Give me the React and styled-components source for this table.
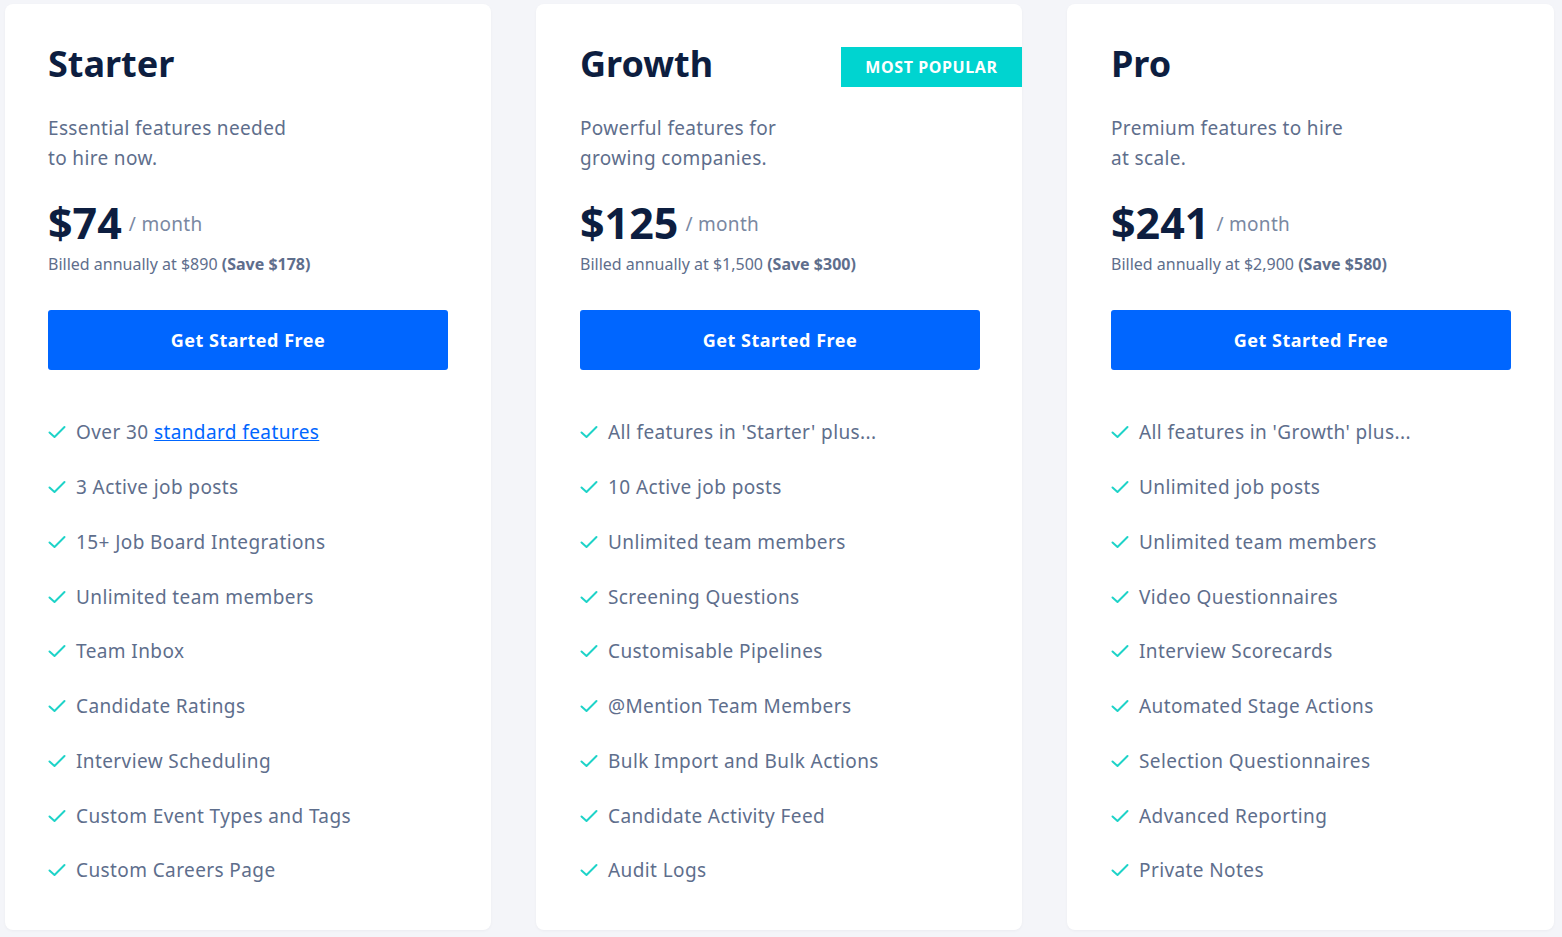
import React from 'react'
import styled, { createGlobalStyle } from 'styled-components'

const plans = [
  {
    name: 'Starter',
    desc: ['Essential features needed', 'to hire now.'],
    price: '$74',
    billed: '$890',
    save: '$178',
    features: [
      'Over 30 |standard features',
      '3 Active job posts',
      '15+ Job Board Integrations',
      'Unlimited team members',
      'Team Inbox',
      'Candidate Ratings',
      'Interview Scheduling',
      'Custom Event Types and Tags',
      'Custom Careers Page',
    ],
  },
  {
    name: 'Growth',
    popular: true,
    desc: ['Powerful features for', 'growing companies.'],
    price: '$125',
    billed: '$1,500',
    save: '$300',
    features: [
      "All features in 'Starter' plus...",
      '10 Active job posts',
      'Unlimited team members',
      'Screening Questions',
      'Customisable Pipelines',
      '@Mention Team Members',
      'Bulk Import and Bulk Actions',
      'Candidate Activity Feed',
      'Audit Logs',
    ],
  },
  {
    name: 'Pro',
    desc: ['Premium features to hire', 'at scale.'],
    price: '$241',
    billed: '$2,900',
    save: '$580',
    features: [
      "All features in 'Growth' plus...",
      'Unlimited job posts',
      'Unlimited team members',
      'Video Questionnaires',
      'Interview Scorecards',
      'Automated Stage Actions',
      'Selection Questionnaires',
      'Advanced Reporting',
      'Private Notes',
    ],
  },
]

const GlobalStyle = createGlobalStyle`
  body {
    margin: 0;
    background: #f4f5f9;
    font-family: "Noto Sans", "Liberation Sans", sans-serif;
  }
`

const Page = styled.div`
  display: grid;
  grid-template-columns: 486px 486px 487px;
  column-gap: 45px;
  padding: 4px 8px 7px 5px;
`

const Card = styled.div`
  position: relative;
  background: #fff;
  border-radius: 8px;
  height: 926px;
  box-sizing: border-box;
  padding: 37px 43px 0 ${(props) => (props.first ? 43 : 44)}px;
  box-shadow: 0 1px 3px rgba(20, 30, 60, 0.04);
`

const Badge = styled.div`
  position: absolute;
  top: 43px;
  right: 0;
  width: 181px;
  height: 40px;
  background: #00d4d0;
  color: #fff;
  font-size: 16px;
  font-weight: 700;
  letter-spacing: 0.6px;
  display: flex;
  align-items: center;
  justify-content: center;
`

const Title = styled.h2`
  margin: 0;
  font-size: 36px;
  line-height: 46px;
  font-weight: 700;
  color: #0d1e40;
`

const Desc = styled.p`
  margin: 26px 0 0;
  font-size: 19px;
  line-height: 30px;
  letter-spacing: 0.35px;
  color: #5e6e8c;
`

const PriceRow = styled.div`
  margin-top: 24px;
  display: flex;
  align-items: center;
  gap: 7px;
`

const Price = styled.span`
  font-size: 43px;
  line-height: 52px;
  font-weight: 700;
  color: #0d1e40;
`

const Per = styled.span`
  font-size: 19px;
  letter-spacing: 0.3px;
  color: #7a88a2;
  padding-top: 2px;
`

const Billed = styled.div`
  margin-top: 4px;
  font-size: 16px;
  color: #5e6e8c;

  b {
    font-weight: 700;
  }
`

const Button = styled.button`
  margin-top: 35px;
  width: 400px;
  height: 60px;
  border: none;
  border-radius: 3px;
  background: #0066ff;
  color: #fff;
  font-family: inherit;
  font-size: 18px;
  font-weight: 700;
  letter-spacing: 0.5px;
  cursor: pointer;
`

const List = styled.ul`
  list-style: none;
  margin: 35px 0 0;
  padding: 0;
`

const Item = styled.li`
  height: 54.75px;
  display: flex;
  align-items: center;
  gap: 10px;
  font-size: 19px;
  letter-spacing: 0.4px;
  color: #5e6e8c;

  a {
    color: #0066ff;
    text-decoration: underline;
  }
`

const Check = () => (
  <svg width="18" height="14" viewBox="0 0 18 14" fill="none">
    <path d="M1.5 7.5 L6.5 12 L16.5 2" stroke="#1ed3c8" strokeWidth="2" strokeLinecap="round" strokeLinejoin="round" />
  </svg>
)

const Feature = ({ text }) => {
  const [plain, link] = text.split('|')
  return (
    <Item>
      <Check />
      <span>
        {plain}
        {link && <a href="#">{link}</a>}
      </span>
    </Item>
  )
}

const App = () => {
  return (
    <>
      <GlobalStyle />
      <Page>
        {plans.map((p, i) => (
          <Card key={p.name} first={i === 0}>
            {p.popular && <Badge>MOST POPULAR</Badge>}
            <Title>{p.name}</Title>
            <Desc>
              {p.desc[0]}
              <br />
              {p.desc[1]}
            </Desc>
            <PriceRow>
              <Price>{p.price}</Price>
              <Per>/ month</Per>
            </PriceRow>
            <Billed>
              Billed annually at {p.billed} <b>(Save {p.save})</b>
            </Billed>
            <Button>Get Started Free</Button>
            <List>
              {p.features.map((f) => (
                <Feature key={f} text={f} />
              ))}
            </List>
          </Card>
        ))}
      </Page>
    </>
  )
}

export default App
